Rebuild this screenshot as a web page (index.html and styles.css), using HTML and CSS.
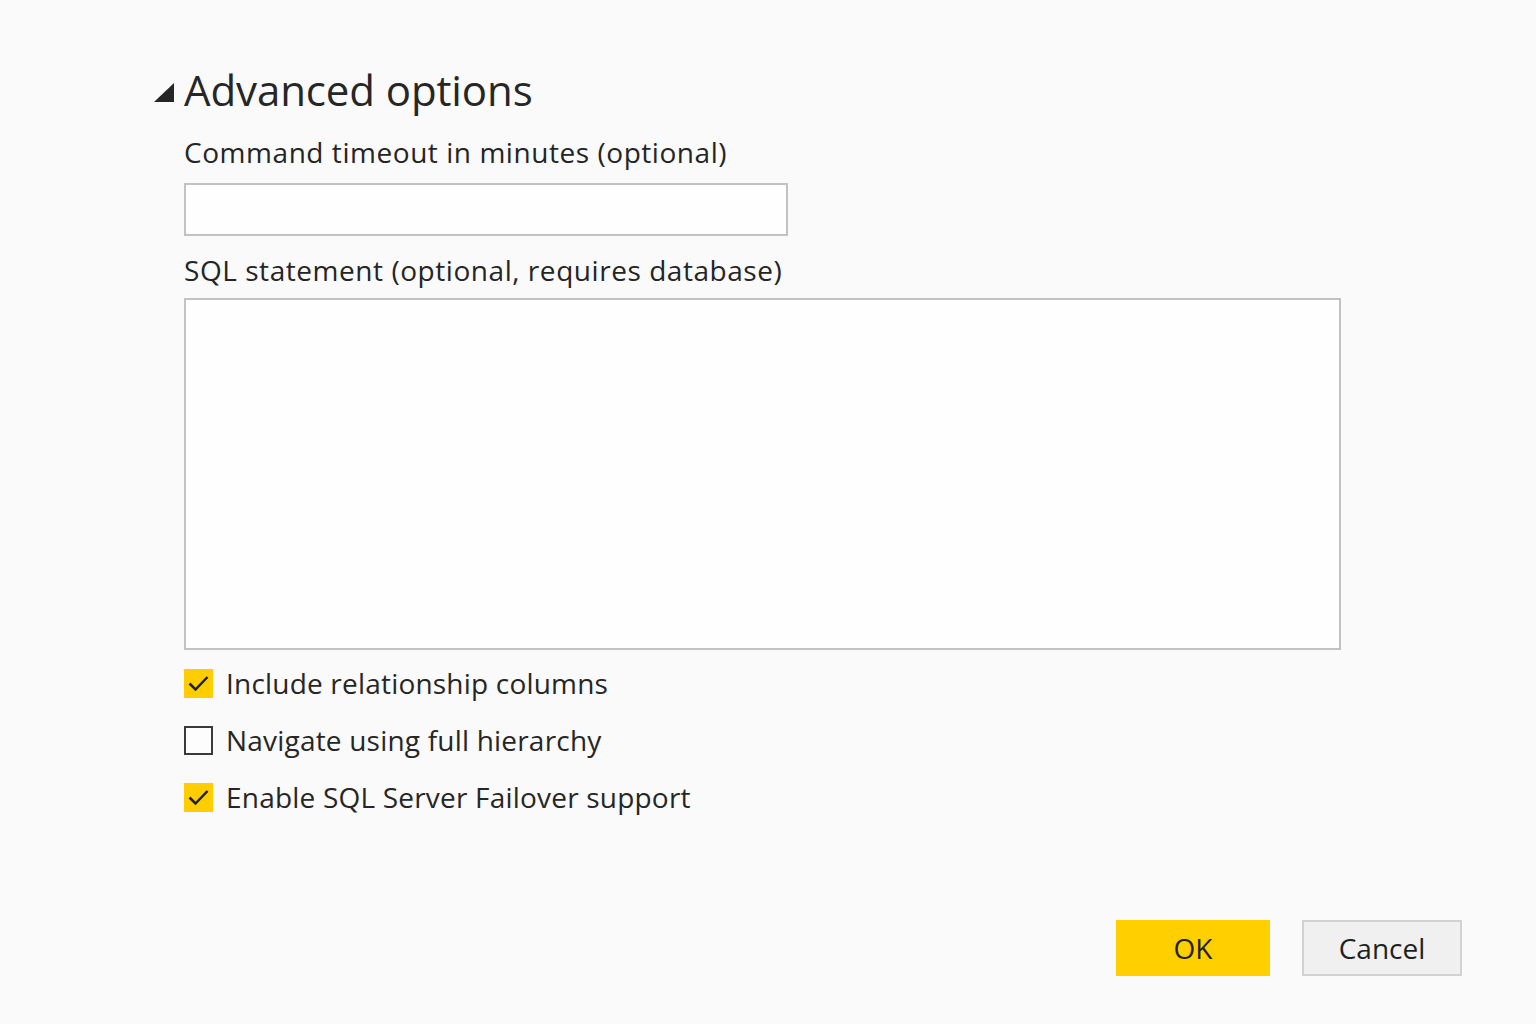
FILE: index.html
```html
<!DOCTYPE html>
<html>
<head>
<meta charset="utf-8">
<link rel="stylesheet" href="styles.css">
</head>
<body>
<div class="dialog">
  <div class="section-head">
    <svg class="caret" width="20" height="20" viewBox="0 0 20 20"><polygon points="20,0 20,19 0,19" fill="#262626"/></svg>
    <h1 class="title">Advanced options</h1>
  </div>
  <div class="content">
    <label class="field-label">Command timeout in minutes (optional)</label>
    <div class="input"></div>
    <label class="field-label sql-label">SQL statement (optional, requires database)</label>
    <div class="textarea"></div>
    <div class="checks">
      <div class="check-row">
        <span class="box checked"><svg width="29" height="29" viewBox="0 0 29 29"><path d="M5.5 14.5 L11.5 20.5 L23.5 8" fill="none" stroke="#1f1f1f" stroke-width="2.5"/></svg></span>
        <span class="check-text">Include relationship columns</span>
      </div>
      <div class="check-row">
        <span class="box"></span>
        <span class="check-text">Navigate using full hierarchy</span>
      </div>
      <div class="check-row">
        <span class="box checked"><svg width="29" height="29" viewBox="0 0 29 29"><path d="M5.5 14.5 L11.5 20.5 L23.5 8" fill="none" stroke="#1f1f1f" stroke-width="2.5"/></svg></span>
        <span class="check-text">Enable SQL Server Failover support</span>
      </div>
    </div>
  </div>
  <div class="buttons">
    <button class="btn ok">OK</button>
    <button class="btn cancel">Cancel</button>
  </div>
</div>
</body>
</html>
```

FILE: styles.css
```css
html, body {
  margin: 0;
  padding: 0;
  background: #fafafa;
}
body {
  width: 1536px;
  height: 1024px;
  font-family: "Open Sans", "Noto Sans", sans-serif;
  color: #252525;
  overflow: hidden;
}
.dialog {
  padding: 60px 0 0 154px;
  height: 1024px;
  box-sizing: border-box;
  display: flex;
  flex-direction: column;
}
.section-head {
  display: flex;
  align-items: center;
  gap: 10px;
  height: 60px;
}
.caret {
  margin-top: 6px;
}
.title {
  margin: 0;
  font-weight: 400;
  font-size: 42px;
  line-height: 60px;
  letter-spacing: -0.1px;
  color: #262626;
}
.content {
  padding-left: 30px;
  display: flex;
  flex-direction: column;
}
.field-label {
  display: block;
  font-size: 28px;
  line-height: 40px;
  margin-top: 12px;
  letter-spacing: 0.55px;
}
.input {
  margin-top: 11px;
  width: 604px;
  height: 53px;
  box-sizing: border-box;
  border: 2px solid #c2c2c2;
  background: #fefefe;
}
.sql-label {
  margin-top: 14px;
}
.textarea {
  margin-top: 8px;
  width: 1157px;
  height: 352px;
  box-sizing: border-box;
  border: 2px solid #c2c2c2;
  background: #fefefe;
}
.checks {
  margin-top: 18px;
  display: flex;
  flex-direction: column;
  gap: 27px;
}
.check-row {
  display: flex;
  align-items: center;
  gap: 13px;
  height: 30px;
}
.box {
  width: 29px;
  height: 29px;
  box-sizing: border-box;
  border: 2px solid #3a3a3a;
  background: #fdfdfd;
  display: flex;
  align-items: center;
  justify-content: center;
}
.box.checked {
  border: none;
  background: #ffcd00;
}
.check-text {
  font-size: 28px;
  letter-spacing: 0.2px;
  color: #262626;
}
.buttons {
  margin-top: auto;
  margin-bottom: 48px;
  display: flex;
  justify-content: flex-end;
  gap: 32px;
  padding-right: 74px;
}
.btn {
  height: 56px;
  font-family: "Open Sans", "Noto Sans", sans-serif;
  font-size: 28px;
  color: #1f1f1f;
  border: none;
  padding: 0;
}
.ok {
  width: 154px;
  background: #ffcf00;
}
.cancel {
  width: 160px;
  background: #f0f0f0;
  border: 2px solid #d2d2d2;
}
```
